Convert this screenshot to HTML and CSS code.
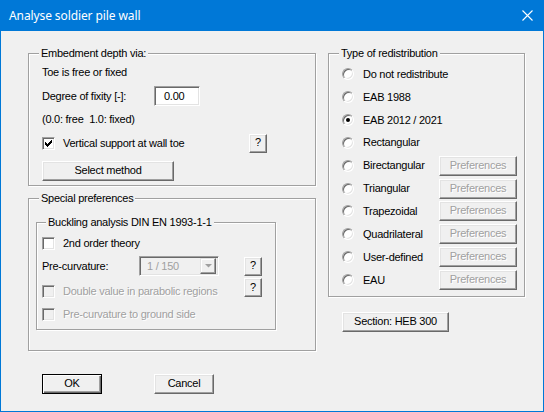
FILE: index.html
```html
<!DOCTYPE html>
<html>
<head>
<meta charset="utf-8">
<title>Analyse soldier pile wall</title>
<link rel="stylesheet" href="styles.css">
</head>
<body>
<div class="window">
  <div class="titlebar">
    <span class="title">Analyse soldier pile wall</span>
    <svg class="close" width="12" height="12" viewBox="0 0 12 12"><path d="M0.5 0.5 L10.5 10.5 M10.5 0.5 L0.5 10.5" stroke="#fff" stroke-width="1.1" fill="none"/></svg>
  </div>
  <div class="client">
    <div class="columns">
      <div class="col-left">
        <div class="group g-embed">
          <span class="legend">Embedment depth via:</span>
          <div class="row r-toe">Toe is free or fixed</div>
          <div class="row r-fix">
            <span class="fix-label">Degree of fixity [-]:</span>
            <span class="edit">0.00</span>
          </div>
          <div class="row r-hint">(0.0: free&nbsp; 1.0: fixed)</div>
          <div class="row r-vert">
            <span class="check-label w-vert"><span class="cb"><svg width="7" height="7" viewBox="0 0 7 7"><rect x="0" y="2" width="1" height="3"/><rect x="1" y="3" width="1" height="3"/><rect x="2" y="4" width="1" height="3"/><rect x="3" y="3" width="1" height="3"/><rect x="4" y="2" width="1" height="3"/><rect x="5" y="1" width="1" height="3"/><rect x="6" y="0" width="1" height="3"/></svg></span>Vertical support at wall toe</span>
            <span class="btn btn-q">?</span>
          </div>
          <div class="row r-select"><span class="btn btn-select">Select method</span></div>
        </div>
        <div class="group g-special">
          <span class="legend">Special preferences</span>
          <div class="group g-buckling">
            <span class="legend">Buckling analysis DIN EN 1993-1-1</span>
            <div class="row r-2nd"><span class="check-label"><span class="cb"></span>2nd order theory</span></div>
            <div class="row r-pre">
              <span class="pre-label">Pre-curvature:</span>
              <span class="combo"><span class="combo-text">1 / 150</span><span class="combo-btn"><svg width="7" height="4" viewBox="0 0 7 4"><path d="M0 0 H7 L3.5 3.5 Z" fill="#a0a0a0"/></svg></span></span>
              <span class="btn btn-q q-pre">?</span>
            </div>
            <div class="row r-double">
              <span class="check-label disabled w-double"><span class="cb cb-dis"></span>Double value in parabolic regions</span>
              <span class="btn btn-q q-double">?</span>
            </div>
            <div class="row r-ground"><span class="check-label disabled"><span class="cb cb-dis"></span>Pre-curvature to ground side</span></div>
          </div>
        </div>
      </div>
      <div class="col-right">
        <div class="group g-type">
          <span class="legend">Type of redistribution</span>
          <div class="radios">
            <div class="rrow"><span class="radio-label"><span class="radio"></span>Do not redistribute</span></div>
            <div class="rrow"><span class="radio-label"><span class="radio"></span>EAB 1988</span></div>
            <div class="rrow"><span class="radio-label"><span class="radio checked"></span>EAB 2012 / 2021</span></div>
            <div class="rrow"><span class="radio-label"><span class="radio"></span>Rectangular</span></div>
            <div class="rrow"><span class="radio-label"><span class="radio"></span>Birectangular</span><span class="btn btn-pref">Preferences</span></div>
            <div class="rrow"><span class="radio-label"><span class="radio"></span>Triangular</span><span class="btn btn-pref">Preferences</span></div>
            <div class="rrow"><span class="radio-label"><span class="radio"></span>Trapezoidal</span><span class="btn btn-pref">Preferences</span></div>
            <div class="rrow"><span class="radio-label"><span class="radio"></span>Quadrilateral</span><span class="btn btn-pref">Preferences</span></div>
            <div class="rrow"><span class="radio-label"><span class="radio"></span>User-defined</span><span class="btn btn-pref">Preferences</span></div>
            <div class="rrow"><span class="radio-label"><span class="radio"></span>EAU</span><span class="btn btn-pref">Preferences</span></div>
          </div>
        </div>
        <span class="btn btn-section">Section: HEB 300</span>
      </div>
    </div>
    <div class="footer">
      <span class="btn btn-ok">OK</span>
      <span class="btn btn-cancel">Cancel</span>
    </div>
  </div>
</div>
</body>
</html>
```
FILE: styles.css
```css
* { box-sizing: border-box; }
html, body { margin: 0; padding: 0; }
body {
  width: 544px;
  height: 412px;
  overflow: hidden;
  font-family: "Liberation Sans", Arial, sans-serif;
  font-size: 11px;
  letter-spacing: -0.25px;
  color: #000;
  background: #f0f0f0;
}
.window {
  width: 544px;
  height: 412px;
  display: flex;
  flex-direction: column;
}
.titlebar {
  height: 31px;
  flex: 0 0 31px;
  background: #0078d7;
  display: flex;
  align-items: center;
  padding-left: 9px;
  position: relative;
}
.title {
  font-family: "Noto Sans", "Open Sans", sans-serif;
  font-size: 12px;
  letter-spacing: -0.1px;
  color: #fff;
  line-height: 16px;
  margin-top: 1px;
}
.close {
  margin-left: auto;
  margin-right: 10px;
  margin-top: 0px;
}
.client {
  flex: 1;
  border: 1px solid #0078d7;
  border-top: 0;
  padding: 22px 0 0 27px;
  background: #f0f0f0;
}
.columns {
  display: flex;
  gap: 12px;
  align-items: flex-start;
}
.col-left {
  width: 288px;
  display: flex;
  flex-direction: column;
}
.col-right {
  width: 197px;
  display: flex;
  flex-direction: column;
  align-items: flex-start;
}
.group {
  position: relative;
  border: 1px solid #a0a0a0;
  box-shadow: inset 1px 1px 0 #fff, 1px 1px 0 #fff;
}
.legend {
  position: absolute;
  top: -7px;
  left: 10px;
  padding: 0 2px;
  background: #f0f0f0;
  line-height: 13px;
  white-space: nowrap;
}
.row {
  display: flex;
  align-items: center;
  white-space: nowrap;
}

/* Embedment group */
.g-embed {
  height: 133px;
  padding: 9px 0 0 13px;
}
.r-toe { height: 18px; }
.r-fix { height: 20px; margin-top: 5px; }
.fix-label { width: 112px; }
.edit {
  width: 46px;
  height: 20px;
  background: #fff;
  border: 1px solid;
  border-color: #a0a0a0 #fff #fff #a0a0a0;
  box-shadow: inset 1px 1px 0 #696969, inset -1px -1px 0 #e3e3e3;
  padding-left: 9px;
  line-height: 18px;
}
.r-hint { height: 18px; margin-top: 4px; }
.r-vert { height: 20px; margin-top: 5px; }
.w-vert { width: 207px; }
.r-select { height: 20px; margin-top: 8px; }

.check-label {
  display: flex;
  align-items: center;
  line-height: 13px;
}
.cb {
  width: 13px;
  height: 13px;
  flex: 0 0 13px;
  margin-right: 8px;
  background: #fff;
  border: 1px solid;
  border-color: #a0a0a0 #fff #fff #a0a0a0;
  box-shadow: inset 1px 1px 0 #696969, inset -1px -1px 0 #e3e3e3;
  display: flex;
  align-items: center;
  justify-content: center;
}
.cb svg { display: block; fill: #000; shape-rendering: crispEdges; }
.cb-dis { background: #f0f0f0; }
.disabled { color: #a0a0a0; text-shadow: 1px 1px 0 #fff; }

/* Buttons */
.btn {
  display: inline-flex;
  align-items: center;
  justify-content: center;
  height: 20px;
  background: #f0f0f0;
  border: 1px solid;
  border-color: #fff #696969 #696969 #fff;
  box-shadow: inset -1px -1px 0 #a0a0a0, inset 1px 1px 0 #e3e3e3;
  line-height: 13px;
  white-space: nowrap;
  padding-bottom: 1px;
}
.btn-q { width: 18px; height: 19px; }
.btn-select { width: 132px; }

/* Special group */
.g-special {
  height: 153px;
  margin-top: 12px;
  padding: 23px 0 0 7px;
}
.g-buckling {
  width: 240px;
  height: 108px;
  padding: 10px 0 0 5px;
}
.g-buckling .legend { left: 9px; }
.r-2nd { height: 20px; }
.r-pre { height: 20px; margin-top: 3px; }
.pre-label { width: 97px; }
.combo {
  width: 80px;
  height: 20px;
  border: 1px solid;
  border-color: #a0a0a0 #fff #fff #a0a0a0;
  box-shadow: inset 1px 1px 0 #696969, inset -1px -1px 0 #e3e3e3;
  background: #f0f0f0;
  display: flex;
  align-items: center;
  padding: 2px 2px 2px 7px;
}
.combo-text {
  flex: 1;
  color: #a0a0a0;
  line-height: 13px;
}
.combo-btn {
  width: 16px;
  height: 16px;
  border: 1px solid;
  border-color: #e3e3e3 #696969 #696969 #e3e3e3;
  box-shadow: inset -1px -1px 0 #a0a0a0, inset 1px 1px 0 #fff;
  display: flex;
  align-items: center;
  justify-content: center;
}
.combo-btn svg { display: block; }
.q-pre { margin-left: 25px; }
.r-double { height: 20px; margin-top: 2px; align-items: flex-start; }
.w-double { width: 202px; margin-top: 7px; }
.r-ground { height: 13px; margin-top: 10px; }

/* Type group */
.g-type {
  width: 197px;
  height: 244px;
  padding: 9px 0 0 13px;
}
.radios {
  display: grid;
  grid-auto-rows: 22.85px;
}
.rrow {
  display: flex;
  align-items: center;
  white-space: nowrap;
}
.radio-label {
  display: flex;
  align-items: center;
  width: 97px;
  line-height: 13px;
}
.radio {
  width: 12px;
  height: 12px;
  flex: 0 0 12px;
  margin-right: 9px;
  border-radius: 50%;
  background: #fff;
  border: 1px solid;
  border-color: #a0a0a0 #fff #fff #a0a0a0;
  box-shadow: inset 1px 1px 0 #696969, inset -1px -1px 0 #e3e3e3;
  position: relative;
}
.radio.checked::after {
  content: "";
  position: absolute;
  left: 3px;
  top: 3px;
  width: 4px;
  height: 4px;
  border-radius: 50%;
  background: #000;
}
.btn-pref {
  width: 78px;
  height: 20px;
  color: #a0a0a0;
  text-shadow: 1px 1px 0 #fff;
}
.btn-section {
  width: 107px;
  margin: 15px 0 0 14px;
}

/* Footer */
.footer {
  display: flex;
  gap: 52px;
  padding-left: 14px;
  margin-top: 23px;
}
.btn-ok {
  width: 60px;
  border: 1px solid #000;
  box-shadow: inset 1px 1px 0 #fff, inset -1px -1px 0 #696969, inset -2px -2px 0 #a0a0a0;
}
.btn-cancel { width: 60px; }
```
